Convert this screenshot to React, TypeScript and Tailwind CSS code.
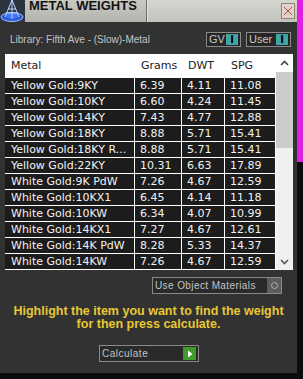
import React from "react";

const rows: [string, string, string, string][] = [
  ["Yellow Gold:9KY", "6.39", "4.11", "11.08"],
  ["Yellow Gold:10KY", "6.60", "4.24", "11.45"],
  ["Yellow Gold:14KY", "7.43", "4.77", "12.88"],
  ["Yellow Gold:18KY", "8.88", "5.71", "15.41"],
  ["Yellow Gold:18KY R...", "8.88", "5.71", "15.41"],
  ["Yellow Gold:22KY", "10.31", "6.63", "17.89"],
  ["White Gold:9K PdW", "7.26", "4.67", "12.59"],
  ["White Gold:10KX1", "6.45", "4.14", "11.18"],
  ["White Gold:10KW", "6.34", "4.07", "10.99"],
  ["White Gold:14KX1", "7.27", "4.67", "12.61"],
  ["White Gold:14K PdW", "8.28", "5.33", "14.37"],
  ["White Gold:14KW", "7.26", "4.67", "12.59"],
];

const verdana = { fontFamily: '"DejaVu Sans", Verdana, sans-serif' };
const tahoma = { fontFamily: '"Liberation Sans", Tahoma, Arial, sans-serif' };

function Toggle({ label, w }: { label: string; w: string }) {
  return (
    <div className={`flex h-[15px] items-center justify-between border border-[#8a8a8a] bg-[#262626] pl-[2px] pr-[2px] ${w}`}>
      <span className="whitespace-nowrap text-[11px] leading-none text-[#c8c8c8]" style={tahoma}>{label}</span>
      <span className="flex h-[11px] w-[12px] shrink-0 items-center justify-center bg-[#3fa6a6] text-[10px] font-bold leading-none text-black" style={verdana}>I</span>
    </div>
  );
}

export default function App() {
  return (
    <div className="flex h-[379px] w-[303px] flex-col bg-[#0c0c0c]">
      <div className="flex h-[373px]">
        <div className="flex h-full w-[297px] flex-col bg-[#323232]">
          {/* title bar */}
          <div className="flex h-[22px] shrink-0 items-stretch">
            <div className="w-[25px] bg-[#2c3440]">
              <svg width="25" height="22" viewBox="0 0 25 22">
                <ellipse cx="12" cy="17" rx="11" ry="4.5" fill="#2b5bd8" stroke="#9cc0ff" strokeWidth="1" />
                <ellipse cx="12" cy="16" rx="7" ry="2.5" fill="#4a7cff" opacity="0.8" />
                <path d="M12 0 L5 17 M12 0 L19 17 M12 0 L12 19 M8 9 L16 9 M6.5 13 L17.5 13" stroke="#bcd4ff" strokeWidth="1" fill="none" />
              </svg>
            </div>
            <div className="flex w-[121px] items-start overflow-hidden bg-gradient-to-b from-[#c9c9c3] to-[#b4b4ae] pl-[4px]">
              <span className="whitespace-nowrap text-[13px] font-bold leading-[12px] text-[#111]" style={tahoma}>METAL WEIGHTS</span>
            </div>
            <div className="w-px bg-[#6c6c66]" />
            <div className="w-px bg-[#e4e4de]" />
            <div className="flex flex-1 items-start justify-end bg-gradient-to-b from-[#d6d6d0] to-[#c2c2bc] pr-[2px] pt-[3px]">
              <div className="flex h-[16px] w-[14px] items-center justify-center border border-[#9a7f7a] bg-[#e2d2cc]">
                <svg width="10" height="10" viewBox="0 0 10 10">
                  <path d="M1 1 L9 9 M9 1 L1 9" stroke="#b04848" strokeWidth="1" />
                </svg>
              </div>
            </div>
          </div>

          {/* library row */}
          <div className="mt-[10px] flex h-[15px] items-center pl-[10px] pr-[6px]">
            <span className="flex-1 whitespace-nowrap text-[10px] leading-none text-[#c4c4c4]" style={tahoma}>Library: Fifth Ave - (Slow)-Metal</span>
            <Toggle label="GV" w="w-[35px]" />
            <div className="w-[5px]" />
            <Toggle label="User" w="w-[45px]" />
          </div>

          {/* table */}
          <div className="ml-[5px] mt-[7px] flex w-[288px]">
            <div className="bg-white pb-px pr-px">
              <div className="grid grid-cols-[129px_46px_42px_50px] gap-px text-[11px] leading-none" style={verdana}>
                {["Metal", "Grams", "DWT", "SPG"].map((h) => (
                  <div key={h} className="flex h-[23px] items-center bg-white pl-[6px] text-[#222]">{h}</div>
                ))}
                {rows.map((r) =>
                  r.map((c, i) => (
                    <div key={r[0] + i} className={`flex h-[15px] items-center whitespace-nowrap bg-[#1c1c1c] text-[#f2f2f2] ${i === 0 ? "pl-[6px]" : "pl-[5px]"}`}>
                      {c}
                    </div>
                  ))
                )}
              </div>
            </div>
            <div className="flex w-[17px] flex-col bg-[#f0f0f0]">
              <div className="flex h-[18px] items-center justify-center bg-white">
                <svg width="9" height="6" viewBox="0 0 9 6"><path d="M1 5 L4.5 1.5 L8 5" stroke="#444" strokeWidth="1.6" fill="none" /></svg>
              </div>
              <div className="h-[76px] bg-[#cbcbcb]" />
              <div className="flex-1" />
              <div className="flex h-[16px] items-center justify-center">
                <svg width="9" height="6" viewBox="0 0 9 6"><path d="M1 1 L4.5 4.5 L8 1" stroke="#555" strokeWidth="1.6" fill="none" /></svg>
              </div>
            </div>
          </div>

          {/* use object materials */}
          <div className="mt-[7px] flex justify-end pr-[15px]">
            <div className="flex h-[17px] w-[130px] items-center justify-between border border-[#8a8a8a] bg-[#2a2a2a] pl-[2px]">
              <span className="whitespace-nowrap text-[10px] leading-none tracking-[0.4px] text-[#c4c4c4]" style={tahoma}>Use Object Materials</span>
              <span className="flex h-[15px] w-[14px] shrink-0 items-center justify-center bg-[#5c5c5c]">
                <span className="h-[7px] w-[7px] rounded-full border border-[#b0b0b0]" />
              </span>
            </div>
          </div>

          {/* instructions */}
          <div className="mt-[11px] flex flex-col items-center text-[12.5px] font-bold leading-[13px] text-[#e7c834]" style={tahoma}>
            <span className="whitespace-nowrap">Highlight the item you want to find the weight</span>
            <span className="whitespace-nowrap">for then press calculate.</span>
          </div>

          {/* calculate */}
          <div className="mt-[14px] flex pl-[99px]">
            <div className="flex h-[17px] w-[100px] items-center justify-between border border-[#8a8a8a] bg-[#2a2a2a] pl-[2px] pr-[2px]">
              <span className="whitespace-nowrap text-[10px] leading-none tracking-[0.5px] text-[#c4c4c4]" style={tahoma}>Calculate</span>
              <span className="flex h-[13px] w-[13px] shrink-0 items-center justify-center bg-[#3f9a2c]">
                <svg width="6" height="8" viewBox="0 0 6 8"><path d="M1 0.5 L5.5 4 L1 7.5 Z" fill="#ffffff" /></svg>
              </span>
            </div>
          </div>
        </div>
        <div className="flex w-[6px] flex-col">
          <div className="h-[162px] bg-[#e21ee0]" />
          <div className="flex-1 bg-[#0c0c0c]" />
        </div>
      </div>
    </div>
  );
}
